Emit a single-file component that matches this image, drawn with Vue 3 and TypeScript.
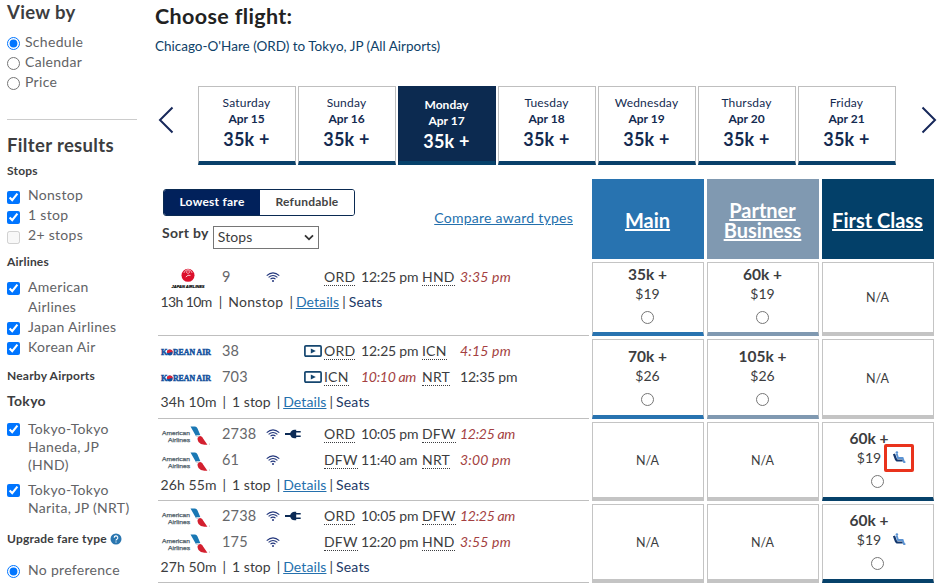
<script setup lang="ts">
import { ref } from 'vue'

type Carrier = 'jal' | 'korean' | 'american'

interface Leg {
  carrier: Carrier
  number: string
  wifi?: boolean
  power?: boolean
  video?: boolean
  from: string
  departs: string
  departsNextDay?: boolean
  to: string
  arrives: string
  arrivesNextDay?: boolean
}

interface Fare {
  points: string
  cash: string
  seat?: boolean
  highlighted?: boolean
}

interface Flight {
  legs: Leg[]
  duration: string
  stops: string
  fares: (Fare | null)[]
}

interface FilterOption {
  label: string
  checked: boolean
  disabled?: boolean
}

const cabins = [
  { label: 'Main', tone: 'main' },
  { label: 'Partner Business', tone: 'business' },
  { label: 'First Class', tone: 'first' },
]

const days = [
  { day: 'Saturday', date: 'Apr 15', price: '35k +' },
  { day: 'Sunday', date: 'Apr 16', price: '35k +' },
  { day: 'Monday', date: 'Apr 17', price: '35k +' },
  { day: 'Tuesday', date: 'Apr 18', price: '35k +' },
  { day: 'Wednesday', date: 'Apr 19', price: '35k +' },
  { day: 'Thursday', date: 'Apr 20', price: '35k +' },
  { day: 'Friday', date: 'Apr 21', price: '35k +' },
]
const selectedDay = ref(2)

const viewModes = ['Schedule', 'Calendar', 'Price']
const viewMode = ref('Schedule')
const upgrade = ref('none')
const fareType = ref('lowest')
const sortBy = ref('Stops')
const chosenFare = ref('')

const stopFilters = ref<FilterOption[]>([
  { label: 'Nonstop', checked: true },
  { label: '1 stop', checked: true },
  { label: '2+ stops', checked: false, disabled: true },
])
const airlineFilters = ref<FilterOption[]>([
  { label: 'American Airlines', checked: true },
  { label: 'Japan Airlines', checked: true },
  { label: 'Korean Air', checked: true },
])
const airportFilters = ref<FilterOption[]>([
  { label: 'Tokyo-Tokyo Haneda, JP (HND)', checked: true },
  { label: 'Tokyo-Tokyo Narita, JP (NRT)', checked: true },
])

const flights: Flight[] = [
  {
    legs: [
      { carrier: 'jal', number: '9', wifi: true, from: 'ORD', departs: '12:25 pm', to: 'HND', arrives: '3:35 pm', arrivesNextDay: true },
    ],
    duration: '13h 10m',
    stops: 'Nonstop',
    fares: [{ points: '35k +', cash: '$19' }, { points: '60k +', cash: '$19' }, null],
  },
  {
    legs: [
      { carrier: 'korean', number: '38', video: true, from: 'ORD', departs: '12:25 pm', to: 'ICN', arrives: '4:15 pm', arrivesNextDay: true },
      { carrier: 'korean', number: '703', video: true, from: 'ICN', departs: '10:10 am', departsNextDay: true, to: 'NRT', arrives: '12:35 pm' },
    ],
    duration: '34h 10m',
    stops: '1 stop',
    fares: [{ points: '70k +', cash: '$26' }, { points: '105k +', cash: '$26' }, null],
  },
  {
    legs: [
      { carrier: 'american', number: '2738', wifi: true, power: true, from: 'ORD', departs: '10:05 pm', to: 'DFW', arrives: '12:25 am', arrivesNextDay: true },
      { carrier: 'american', number: '61', wifi: true, from: 'DFW', departs: '11:40 am', to: 'NRT', arrives: '3:00 pm', arrivesNextDay: true },
    ],
    duration: '26h 55m',
    stops: '1 stop',
    fares: [null, null, { points: '60k +', cash: '$19', seat: true, highlighted: true }],
  },
  {
    legs: [
      { carrier: 'american', number: '2738', wifi: true, power: true, from: 'ORD', departs: '10:05 pm', to: 'DFW', arrives: '12:25 am', arrivesNextDay: true },
      { carrier: 'american', number: '175', wifi: true, from: 'DFW', departs: '12:20 pm', to: 'HND', arrives: '3:55 pm', arrivesNextDay: true },
    ],
    duration: '27h 50m',
    stops: '1 stop',
    fares: [null, null, { points: '60k +', cash: '$19', seat: true }],
  },
]

const isLong = (time: string) => time.length > 7
</script>

<template>
  <div class="page">
    <aside class="sidebar">
      <h2 class="side-title">View by</h2>
      <div class="options view-options">
        <label v-for="mode in viewModes" :key="mode" class="option lifted">
          <input v-model="viewMode" type="radio" name="view" :value="mode" />
          <span>{{ mode }}</span>
        </label>
      </div>

      <h2 class="side-title filter-title">Filter results</h2>
      <h3 class="side-label">Stops</h3>
      <div class="options stops">
        <label v-for="item in stopFilters" :key="item.label" class="option wide lifted">
          <input v-model="item.checked" type="checkbox" :disabled="item.disabled" />
          <span>{{ item.label }}</span>
        </label>
      </div>

      <h3 class="side-label airlines-label">Airlines</h3>
      <div class="options airlines">
        <label v-for="item in airlineFilters" :key="item.label" class="option wide">
          <input v-model="item.checked" type="checkbox" />
          <span>{{ item.label }}</span>
        </label>
      </div>

      <h3 class="side-label nearby-label">Nearby Airports</h3>
      <h4 class="city">Tokyo</h4>
      <div class="options airports">
        <label v-for="item in airportFilters" :key="item.label" class="option wide tight">
          <input v-model="item.checked" type="checkbox" />
          <span>{{ item.label }}</span>
        </label>
      </div>

      <h3 class="side-label upgrade-label">
        Upgrade fare type
        <svg class="help" viewBox="0 0 12 12">
          <circle cx="6" cy="6" r="5.5" fill="#2a76b0" />
          <path d="M4.2 4.7a1.8 1.8 0 1 1 2.7 1.5q-.9.5-.9 1.2M6 8.5v1.1" fill="none" stroke="#fff" stroke-width="1.1" />
        </svg>
      </h3>
      <label class="option wide lifted upgrade-option">
        <input v-model="upgrade" type="radio" name="upgrade" value="none" />
        <span>No preference</span>
      </label>
    </aside>

    <main class="content">
      <h1>Choose flight:</h1>
      <p class="route">Chicago-O'Hare (ORD) to Tokyo, JP (All Airports)</p>

      <nav class="dates">
        <svg class="chevron" viewBox="0 0 16 28"><path d="M14.5 1.5 2 14l12.500 12.500" /></svg>
        <div class="cards">
          <button
            v-for="(item, i) in days"
            :key="item.date"
            class="date-card"
            :class="{ selected: i === selectedDay }"
            @click="selectedDay = i"
          >
            <span class="day">{{ item.day }}</span>
            <span class="date">{{ item.date }}</span>
            <span class="price">{{ item.price }}</span>
          </button>
        </div>
        <svg class="chevron" viewBox="0 0 16 28"><path d="M1.500 1.500 14 14 1.500 26.500" /></svg>
      </nav>

      <div class="results">
        <div class="controls">
          <div class="control-left">
            <div class="toggle">
              <button :class="{ on: fareType === 'lowest' }" @click="fareType = 'lowest'">Lowest fare</button>
              <button :class="{ on: fareType === 'refundable' }" @click="fareType = 'refundable'">Refundable</button>
            </div>
            <label class="sort">
              <span>Sort by</span>
              <span class="select-box">
                <select v-model="sortBy">
                  <option>Stops</option>
                  <option>Price</option>
                </select>
                <svg viewBox="0 0 10 7"><path d="M1 1.300 5 5.300l4-4" /></svg>
              </span>
            </label>
          </div>
          <a class="compare">Compare award types</a>
        </div>
        <div v-for="cabin in cabins" :key="cabin.tone" class="cabin" :class="cabin.tone">
          <a>{{ cabin.label }}</a>
        </div>

        <template v-for="(flight, f) in flights" :key="f">
          <div class="flight" :class="{ single: flight.legs.length === 1 }">
            <div v-for="(leg, l) in flight.legs" :key="l" class="leg">
              <svg v-if="leg.carrier === 'jal'" class="logo" viewBox="0 0 50 22">
                <circle cx="27" cy="9.300" r="6.500" fill="#dc0f2b" />
                <path d="M22.800 7q1.300-3 3.700-3.500l-1 3 1.500 1 1.500-1-1-3q2.500.5 3.700 3.500" fill="none" stroke="#fff" stroke-width=".6" />
                <path d="M24.800 11q2-2.600 4.700-1.600" fill="none" stroke="#fff" stroke-width=".8" />
                <text x="10.500" y="21.600" class="jal-word" textLength="33" lengthAdjust="spacingAndGlyphs">JAPAN AIRLINES</text>
              </svg>
              <svg v-else-if="leg.carrier === 'korean'" class="logo" viewBox="0 0 50 22">
                <text x="0" y="15.200" class="korean-word" textLength="6.500" lengthAdjust="spacingAndGlyphs">K</text>
                <circle cx="8.800" cy="12.500" r="2.900" fill="#12509c" />
                <path d="M5.900 12.500a2.900 2.900 0 0 1 5.800 0q-1.500-1.200-2.900 0t-2.900 0" fill="#dc2338" />
                <text x="11.900" y="15.200" class="korean-word" textLength="38" lengthAdjust="spacingAndGlyphs">REAN AIR</text>
              </svg>
              <svg v-else class="logo" viewBox="0 0 50 22">
                <text x="1" y="12.200" class="aa-word" textLength="28" lengthAdjust="spacingAndGlyphs">American</text>
                <text x="7" y="18.700" class="aa-word" textLength="22" lengthAdjust="spacingAndGlyphs">Airlines</text>
                <path d="M29.500 3.500H34q1.600 0 2.400 1.700l3 7q-2.500-.9-4.500.9Z" fill="#1a78b4" />
                <path d="M34.400 13.100q2-1.800 4.500-.9l-2.200 2.300Z" fill="#c3d3de" />
                <path d="M36.500 15.300q1.500-3.200 4-1.900 1 .7 1.600 2l4.300 6.400h-3q-4-.2-5.900-2.800-1.100-1.500-1-3.700" fill="#d3202f" />
                <circle cx="48.500" cy="21" r=".5" fill="#aaa" />
              </svg>

              <span class="number">{{ leg.number }}</span>
              <span class="amenities">
                <svg v-if="leg.wifi" class="wifi" viewBox="0 0 14 10">
                  <path d="M.7 3.600q6.300-5.400 12.600 0M2.600 5.400q4.400-3.700 8.800 0M4.500 7.200q2.500-2.100 5 0" />
                  <circle cx="7" cy="8.900" r="1" />
                </svg>
                <svg v-if="leg.power" class="plug" viewBox="0 0 16 10">
                  <path d="M0 4.100h5.200Q6.200 1 9.500.8h1.700v8.400H9.500Q6.200 9 5.200 5.900H0ZM11.200 2h4.500v1.500h-4.500ZM11.200 6.500h4.500V8h-4.500Z" />
                </svg>
              </span>
              <span class="video-slot">
                <svg v-if="leg.video" class="video" viewBox="0 0 18 12">
                  <rect x=".9" y=".9" width="16.200" height="10.200" rx="1" />
                  <path d="M6.800 3.500 11.800 6l-5 2.500Z" />
                </svg>
              </span>
              <span><abbr>{{ leg.from }}</abbr></span>
              <span class="time" :class="{ next: leg.departsNextDay, long: isLong(leg.departs) }">{{ leg.departs }}</span>
              <span><abbr>{{ leg.to }}</abbr></span>
              <span class="time" :class="{ next: leg.arrivesNextDay, long: isLong(leg.arrives) }">{{ leg.arrives }}</span>
            </div>
            <div class="summary">
              <span class="duration">{{ flight.duration }}</span>
              <span class="bar spaced">|</span>
              <span class="stop-count">{{ flight.stops }}</span>
              <span class="bar before">|</span>
              <a class="details">Details</a>
              <span class="bar">|</span>
              <a class="seats">Seats</a>
            </div>
          </div>

          <div
            v-for="(fare, c) in flight.fares"
            :key="c"
            class="fare"
            :class="[fare ? cabins[c].tone : 'none', { raised: flight.legs.length === 1 }]"
          >
            <template v-if="fare">
              <div class="amounts" :class="{ 'with-seat': fare.seat }">
                <strong>{{ fare.points }}</strong>
                <span>{{ fare.cash }}</span>
                <span v-if="fare.seat" class="seat-badge" :class="{ boxed: fare.highlighted }">
                  <svg viewBox="0 0 13 12">
                    <path d="M1 3 3 8.400l1 1.100h5.800" fill="none" stroke="#12366d" stroke-width="2.200" />
                    <circle cx="3.900" cy="1.500" r="1.300" fill="#5c94d4" />
                    <path d="M3.700 2.800 5 7h4.600l1.500 4.200h1.300" fill="none" stroke="#5c94d4" stroke-width="1.900" />
                  </svg>
                </span>
              </div>
              <input v-model="chosenFare" type="radio" name="fare" :value="`${f}-${c}`" />
            </template>
            <span v-else class="na">N/A</span>
          </div>
        </template>
      </div>
    </main>
  </div>
</template>

<style>
body {
  margin: 0;
  background: #fff;
  overflow: hidden;
}
</style>

<style scoped>
* {
  box-sizing: border-box;
}
.page {
  display: grid;
  grid-template-columns: 155px 782px;
  width: 937px;
  height: 584px;
  overflow: hidden;
  font-family: Lato, "Liberation Sans", sans-serif;
  font-size: 14px;
  color: #3c3d40;
}
h1, h2, h3, h4, p {
  margin: 0;
}
button {
  font: inherit;
  letter-spacing: inherit;
  padding: 0;
  margin: 0;
}
input {
  width: 13px;
  height: 13px;
  margin: 0;
  flex: none;
}

/* Sidebar */
.sidebar {
  padding-left: 7px;
  width: 137px;
}
.side-title {
  font-size: 18.500px;
  line-height: 24px;
  height: 24px;
  font-weight: 700;
  letter-spacing: 0.35px;
  white-space: nowrap;
}
.view-options {
  margin-top: 9px;
  padding-bottom: 26px;
  border-bottom: 1px solid #ccc;
}
.side-title.filter-title {
  margin-top: 13px;
}
.side-label {
  display: flex;
  align-items: center;
  font-size: 12px;
  line-height: 20px;
  letter-spacing: 0.2px;
  white-space: nowrap;
}
.filter-title + .side-label {
  margin-top: 4px;
}
.option {
  display: flex;
  line-height: 20px;
  gap: 5px;
  color: #626366;
  letter-spacing: 0.3px;
}
.option input {
  margin-top: 4px;
}
.option.wide {
  gap: 8px;
}
.option.lifted span {
  margin: -1px 0 1px;
}
.option.tight {
  line-height: 18px;
}
.option.tight input {
  margin-top: 3px;
}
.stops {
  margin-top: 5px;
}
.stops .option input,
.airlines .option input {
  margin-top: 5px;
}
.airlines-label {
  margin-top: 6px;
}
.airlines {
  margin-top: 5px;
}
.nearby-label {
  margin-top: 9px;
}
.city {
  margin-top: 5px;
  font-size: 14px;
  line-height: 20px;
  letter-spacing: 0.3px;
}
.airports {
  display: flex;
  flex-direction: column;
  gap: 7px;
  margin-top: 9px;
}
.upgrade-label {
  margin-top: 12px;
  gap: 3px;
}
.help {
  width: 12px;
  height: 12px;
}
.upgrade-option {
  margin-top: 12px;
}

/* Heading */
h1 {
  font-size: 21.500px;
  line-height: 26px;
  padding-top: 3px;
  letter-spacing: 0.35px;
  color: #222;
}
.route {
  margin-top: 7px;
  line-height: 20px;
  font-size: 13.500px;
  color: #0e4168;
  white-space: nowrap;
}

/* Date strip */
.dates {
  display: flex;
  align-items: center;
  height: 79px;
  margin-top: 30px;
  padding-left: 3px;
}
.chevron {
  width: 16px;
  height: 28px;
  margin-top: -11px;
  fill: none;
  stroke: #17285a;
  stroke-width: 2;
}
.cards {
  display: flex;
  gap: 2px;
  margin: 0 25px 0 24px;
}
.date-card {
  display: flex;
  flex-direction: column;
  align-items: center;
  width: 98px;
  height: 79px;
  padding: 8px 1px 0 0;
  border: 1px solid #bfbfbf;
  border-bottom: 4px solid #09406a;
  background: #fff;
  color: #132a50;
}
.date-card.selected {
  background: #0c2a50;
  border-color: #0c2a50;
  border-bottom-color: #06416a;
  color: #fff;
  padding-top: 10px;
}
.day {
  font-size: 12px;
  line-height: 16px;
  letter-spacing: 0.2px;
}
.selected .day {
  font-weight: 700;
  letter-spacing: 0;
}
.date {
  font-size: 12px;
  line-height: 16px;
  font-weight: 700;
}
.price {
  font-size: 18px;
  line-height: 25px;
  font-weight: 700;
  letter-spacing: 0.2px;
}

/* Results */
.results {
  display: grid;
  grid-template-columns: 431px repeat(3, 112px);
  grid-template-rows: 80px 74px 80px 79px 79px;
  gap: 3px;
  margin: 14px 0 0 3px;
}
.controls {
  display: flex;
  justify-content: space-between;
  padding: 10px 16px 0 5px;
}
.toggle {
  display: flex;
  width: 192px;
  height: 27px;
  border: 1px solid #0a2a52;
  border-radius: 3px;
  overflow: hidden;
}
.toggle button {
  flex: 1;
  border: 0;
  background: #fff;
  font-size: 12px;
  font-weight: 700;
  color: #444;
  letter-spacing: 0.25px;
  padding-bottom: 3px;
}
.toggle button.on {
  flex: 0 0 96px;
  background: #01215b;
  color: #fff;
}
.sort {
  display: flex;
  gap: 4px;
  margin: 7px 0 0 -1px;
  line-height: 20px;
  font-weight: 700;
  letter-spacing: 0.3px;
}
.select-box {
  display: flex;
  align-items: center;
  width: 106px;
  height: 23px;
  margin-top: 3px;
  border: 1px solid #767676;
  padding-right: 4px;
}
.select-box select {
  flex: 1;
  appearance: none;
  border: 0;
  padding: 0 0 2px 4px;
  background: #fff;
  font: 400 14px Lato, sans-serif;
  letter-spacing: 0.1px;
  color: #3c3d40;
}
.select-box svg {
  width: 10px;
  height: 7px;
  fill: none;
  stroke: #333;
  stroke-width: 1.800;
}
.compare {
  margin-top: 19px;
  line-height: 20px;
  letter-spacing: 0.26px;
  color: #2470ad;
  text-decoration: underline;
}
.cabin {
  display: flex;
  align-items: center;
  justify-content: center;
  text-align: center;
  font-size: 20px;
  line-height: 20px;
  font-weight: 700;
  color: #fff;
  padding: 1px 1px 0 0;
}
.cabin a {
  text-decoration: underline;
}
.cabin.main {
  background: #2873b0;
}
.cabin.business {
  background: #8099b1;
}
.cabin.first {
  background: #034069;
}

.flight {
  margin-top: -1px;
  border-bottom: 1px solid #bfbfbf;
  padding-left: 3px;
}
.flight.single {
  padding-top: 3px;
}
.leg {
  display: grid;
  grid-template-columns: 61px 44px 38px 20px 37px 61px 38px 80px;
  align-items: center;
  height: 26px;
  line-height: 20px;
  white-space: nowrap;
  letter-spacing: 0.2px;
}
.logo {
  width: 50px;
  height: 22px;
  overflow: visible;
}
.jal-word {
  font: italic 900 4.300px "Liberation Sans", sans-serif;
  stroke: #000;
  stroke-width: 0.2;
  letter-spacing: 0;
}
.korean-word {
  font: 700 8px "Liberation Serif", serif;
  fill: #12509c;
  stroke: #12509c;
  stroke-width: 0.45;
  letter-spacing: 0;
}
.aa-word {
  font: 400 6.200px "Liberation Sans", sans-serif;
  fill: #4a5964;
  stroke: #4a5964;
  stroke-width: 0.25;
  letter-spacing: 0;
}
.number {
  font-size: 14.500px;
  color: #66676a;
}
.amenities {
  display: flex;
  align-items: center;
  gap: 5px;
}
.wifi {
  width: 14px;
  height: 10px;
  fill: #22367c;
}
.wifi path {
  fill: none;
  stroke: #22367c;
  stroke-width: 1.100;
}
.plug {
  width: 16px;
  height: 10px;
  fill: #0b2a55;
}
.video-slot {
  display: flex;
}
.video {
  width: 18px;
  height: 12px;
}
.video rect {
  fill: #fff;
  stroke: #15466f;
  stroke-width: 1.700;
}
.video path {
  fill: #15466f;
}
abbr {
  border-bottom: 1px dotted #3c3d40;
}
.time.long {
  letter-spacing: -0.2px;
}
.time.next {
  font-style: italic;
  color: #a43f42;
}
.time.next.long {
  letter-spacing: -0.3px;
}
.summary {
  display: flex;
  height: 22px;
  align-items: center;
  white-space: nowrap;
}
.duration {
  margin-left: -0.5px;
  letter-spacing: 0.1px;
}
.single .duration {
  letter-spacing: -0.6px;
}
.single .stop-count {
  letter-spacing: 0.3px;
}
.bar {
  margin: 0 3px;
}
.bar.spaced {
  margin: 0 6px;
}
.bar.before {
  margin: 0 3px 0 6px;
}
.single .bar.spaced {
  margin: 0 6px 0 7px;
}
.details {
  color: #2470ad;
  letter-spacing: 0.1px;
  text-decoration: underline;
}
.seats {
  color: #213866;
  letter-spacing: 0.2px;
}

.fare {
  display: flex;
  flex-direction: column;
  align-items: center;
  justify-content: center;
  border: 1px solid #c4c4c4;
  border-bottom: 4px solid #c4c4c4;
  font-size: 14px;
  padding-right: 1px;
}
.fare.main,
.fare.business {
  padding-bottom: 2px;
}
.fare.main {
  border-bottom-color: #2873b0;
}
.fare.business {
  border-bottom-color: #8099b1;
}
.fare.first {
  border-bottom-color: #06416a;
  padding-bottom: 3px;
}
.fare.raised {
  padding-bottom: 7px;
}
.amounts {
  position: relative;
  display: flex;
  flex-direction: column;
  align-items: center;
  line-height: 19px;
  margin-bottom: 8px;
}
.amounts.with-seat {
  margin-right: 17px;
}
.amounts strong {
  font-size: 15.500px;
}
.seat-badge {
  position: absolute;
  left: 35px;
  top: 15px;
  display: flex;
  align-items: center;
  justify-content: center;
  width: 30px;
  height: 28px;
}
.seat-badge.boxed {
  border: 3px solid #e9331c;
  border-radius: 2px;
}
.seat-badge svg {
  width: 13px;
  height: 12px;
  margin: -2px 0 0 1px;
  flex: none;
}
.na {
  font-size: 12.500px;
  padding-top: 1px;
}
.fare.raised.none {
  padding-bottom: 2px;
}
</style>
